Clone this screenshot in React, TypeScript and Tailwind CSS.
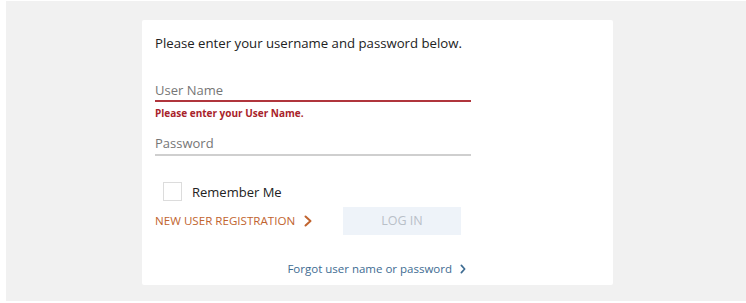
import { useState } from 'react';

function Chevron({ className, w, h, stroke }: { className: string; w: number; h: number; stroke: number }) {
  return (
    <svg width={w} height={h} viewBox={`0 0 ${w} ${h}`} fill="none" className={className}>
      <polyline
        points={`${stroke / 2 + 0.5},${stroke / 2 + 0.5} ${w - stroke / 2 - 0.5},${h / 2} ${stroke / 2 + 0.5},${h - stroke / 2 - 0.5}`}
        stroke="currentColor"
        strokeWidth={stroke}
        strokeLinecap="round"
        strokeLinejoin="round"
      />
    </svg>
  );
}

export default function App() {
  const [remember, setRemember] = useState(false);

  return (
    <div className="h-[303px] w-full bg-white pl-[6px] pt-[1px]" style={{ fontFamily: '"Open Sans", "Liberation Sans", sans-serif' }}>
      <div className="h-[300px] w-full bg-[#f1f1f1] pl-[136px] pt-[19px]">
        {/* Card */}
        <div className="h-[265px] w-[471px] rounded-[2px] bg-white pl-[13px] pt-[14px]">
          <p className="text-[13.2px] leading-[18px] text-[#222]">
            Please enter your username and password below.
          </p>

          <div className="w-[316px]">
            {/* User name */}
            <div className="mt-[29px] border-b-2 border-[#b0353c] pb-[1px] text-[13px] leading-[18px] text-[#767676]">
              User Name
            </div>
            <p className="mt-[4px] text-[10px] font-bold leading-[14px] text-[#a8232b]">
              Please enter your User Name.
            </p>

            {/* Password */}
            <div className="mt-[14px] border-b-2 border-[#cfcfcf] pb-[2px] text-[13px] leading-[18px] text-[#767676]">
              Password
            </div>

            {/* Remember me */}
            <label className="ml-[8px] mt-[26px] flex items-center gap-[10px]">
              <button
                type="button"
                onClick={() => setRemember(!remember)}
                className="h-[19px] w-[19px] border border-[#dcdcdc] bg-white"
              >
                {remember ? '✓' : ''}
              </button>
              <span className="text-[13px] leading-[18px] text-[#222]">Remember Me</span>
            </label>

            {/* Actions */}
            <div className="mt-[6px] flex items-center">
              <a className="flex w-[188px] items-center gap-[9px] text-[11.6px] uppercase leading-[16px] text-[#c1642f]">
                New User Registration
                <Chevron className="text-[#c1642f]" w={8} h={12} stroke={2} />
              </a>
              <button
                type="button"
                className="h-[28px] w-[118px] bg-[#eef3f9] text-[12.5px] uppercase text-[#b9c0c8]"
              >
                Log In
              </button>
            </div>

            <div className="mt-[25px] flex justify-end pr-[5px]">
              <a className="flex items-center gap-[8px] text-[11.5px] leading-[18px] text-[#3e6c92]">
                Forgot user name or password
                <Chevron className="text-[#3e6c92]" w={6} h={10} stroke={1.7} />
              </a>
            </div>
          </div>
        </div>
      </div>
    </div>
  );
}
